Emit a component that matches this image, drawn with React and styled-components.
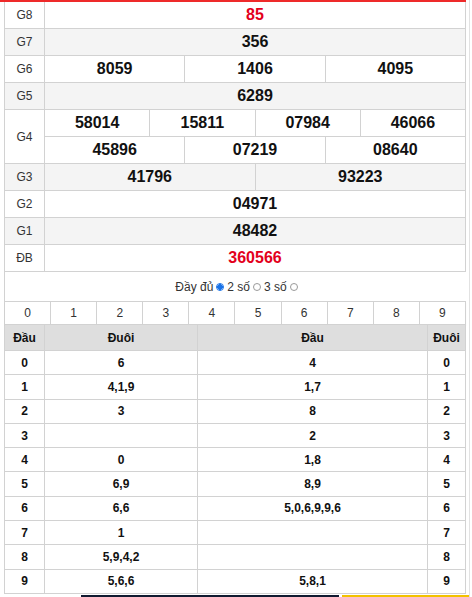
import styled, { createGlobalStyle } from "styled-components"

const GlobalStyle = createGlobalStyle`
  html, body {
    margin: 0;
    padding: 0;
    background: #fff;
  }
  body {
    font-family: "Liberation Sans", Arial, sans-serif;
    color: #222;
  }
`

const Page = styled.div`
  width: 470px;
  box-sizing: border-box;
  border-right: 1px solid #e2e2e2;
`

const RedBar = styled.div`
  width: 466px;
  height: 2px;
  background: #ee2a2a;
`

const Result = styled.div`
  margin-left: 4px;
  width: 462px;
  box-sizing: border-box;
  border-left: 1px solid #d2d2d2;
`

const PrizeRow = styled.div`
  display: grid;
  grid-template-columns: 40px 1fr;
  background: ${(props) => (props.shaded ? "#f4f4f4" : "#fff")};
`

const Label = styled.div`
  display: flex;
  align-items: center;
  justify-content: center;
  border-right: 1px solid #d2d2d2;
  border-bottom: 1px solid #d2d2d2;
  font-size: 12px;
  color: #333;
`

const Lines = styled.div`
  display: flex;
  flex-direction: column;
`

const Numbers = styled.div`
  display: grid;
  grid-template-columns: repeat(${(props) => props.count}, 1fr);
`

const Num = styled.div`
  height: 26px;
  display: flex;
  align-items: center;
  justify-content: center;
  border-right: 1px solid #d2d2d2;
  border-bottom: 1px solid #d2d2d2;
  font-size: 16px;
  font-weight: bold;
  color: ${(props) => (props.red ? "#e3001b" : "#111")};
`

const Options = styled.div`
  margin-left: 4px;
  height: 29px;
  display: flex;
  align-items: center;
  justify-content: center;
  gap: 2px;
  border-left: 1px solid #d2d2d2;
  font-size: 12px;
  color: #333;
`

const Radio = styled.span`
  width: 8px;
  height: 8px;
  border-radius: 50%;
  box-sizing: border-box;
  display: inline-block;
  margin: 0 1px;
  border: 1px solid ${(props) => (props.checked ? "#1a73e8" : "#9a9a9a")};
  background: ${(props) =>
    props.checked ? "radial-gradient(circle, #1a73e8 0 2.6px, #fff 3px)" : "#fff"};
`

const Loto = styled.div`
  margin-left: 4px;
  width: 462px;
  box-sizing: border-box;
  border-left: 1px solid #d2d2d2;
  border-top: 1px solid #d2d2d2;
`

const DigitRow = styled.div`
  display: grid;
  grid-template-columns: repeat(10, 1fr);
  box-shadow: 0 1px 1px rgba(0, 0, 0, 0.06);
`

const Digit = styled.div`
  height: 22px;
  display: flex;
  align-items: center;
  justify-content: center;
  border-right: 1px solid #d2d2d2;
  border-bottom: 1px solid #d2d2d2;
  font-size: 12px;
  color: #333;
`

const LotoGrid = styled.div`
  display: grid;
  grid-template-columns: 40px 153px 230px 38px;
  grid-template-rows: 26px;
  grid-auto-rows: 24.3px;
`

const Cell = styled.div`
  display: flex;
  align-items: center;
  justify-content: center;
  box-sizing: border-box;
  border-right: 1px solid #d2d2d2;
  border-bottom: 1px solid #d2d2d2;
  font-size: 12px;
  font-weight: bold;
  color: #111;
  background: ${(props) => (props.head ? "#dedede" : "#fff")};
`

const Banner = styled.div`
  display: flex;
  gap: 3px;
  margin: 1px 0 0 81px;
  height: 12px;
`

const Strip = styled.div`
  width: ${(props) => props.w}px;
  background: ${(props) => props.bg};
`

const prizes = [
  { name: "G8", lines: [["85"]], red: true },
  { name: "G7", lines: [["356"]] },
  { name: "G6", lines: [["8059", "1406", "4095"]] },
  { name: "G5", lines: [["6289"]] },
  { name: "G4", lines: [["58014", "15811", "07984", "46066"], ["45896", "07219", "08640"]] },
  { name: "G3", lines: [["41796", "93223"]] },
  { name: "G2", lines: [["04971"]] },
  { name: "G1", lines: [["48482"]] },
  { name: "ĐB", lines: [["360566"]], red: true },
]

const loto = [
  ["6", "4"],
  ["4,1,9", "1,7"],
  ["3", "8"],
  ["", "2"],
  ["0", "1,8"],
  ["6,9", "8,9"],
  ["6,6", "5,0,6,9,9,6"],
  ["1", ""],
  ["5,9,4,2", ""],
  ["5,6,6", "5,8,1"],
]

export default function App() {
  return (
    <Page>
      <GlobalStyle />
      <RedBar />
      <Result>
        {prizes.map((p, i) => (
          <PrizeRow key={p.name} shaded={i % 2 === 1}>
            <Label>{p.name}</Label>
            <Lines>
              {p.lines.map((line, j) => (
                <Numbers key={j} count={line.length}>
                  {line.map((n) => (
                    <Num key={n} red={p.red}>{n}</Num>
                  ))}
                </Numbers>
              ))}
            </Lines>
          </PrizeRow>
        ))}
      </Result>

      <Options>
        <span>Đầy đủ</span>
        <Radio checked />
        <span>2 số</span>
        <Radio />
        <span>3 số</span>
        <Radio />
      </Options>

      <Loto>
        <DigitRow>
          {[0, 1, 2, 3, 4, 5, 6, 7, 8, 9].map((d) => (
            <Digit key={d}>{d}</Digit>
          ))}
        </DigitRow>
        <LotoGrid>
          <Cell head>Đầu</Cell>
          <Cell head>Đuôi</Cell>
          <Cell head>Đầu</Cell>
          <Cell head>Đuôi</Cell>
          {loto.map((row, i) => [
            <Cell key={"a" + i}>{i}</Cell>,
            <Cell key={"b" + i}>{row[0]}</Cell>,
            <Cell key={"c" + i}>{row[1]}</Cell>,
            <Cell key={"d" + i}>{i}</Cell>,
          ])}
        </LotoGrid>
      </Loto>

      <Banner>
        <Strip w={260} bg="#101a30" />
        <Strip w={128} bg="#f2c200" />
      </Banner>
    </Page>
  )
}
